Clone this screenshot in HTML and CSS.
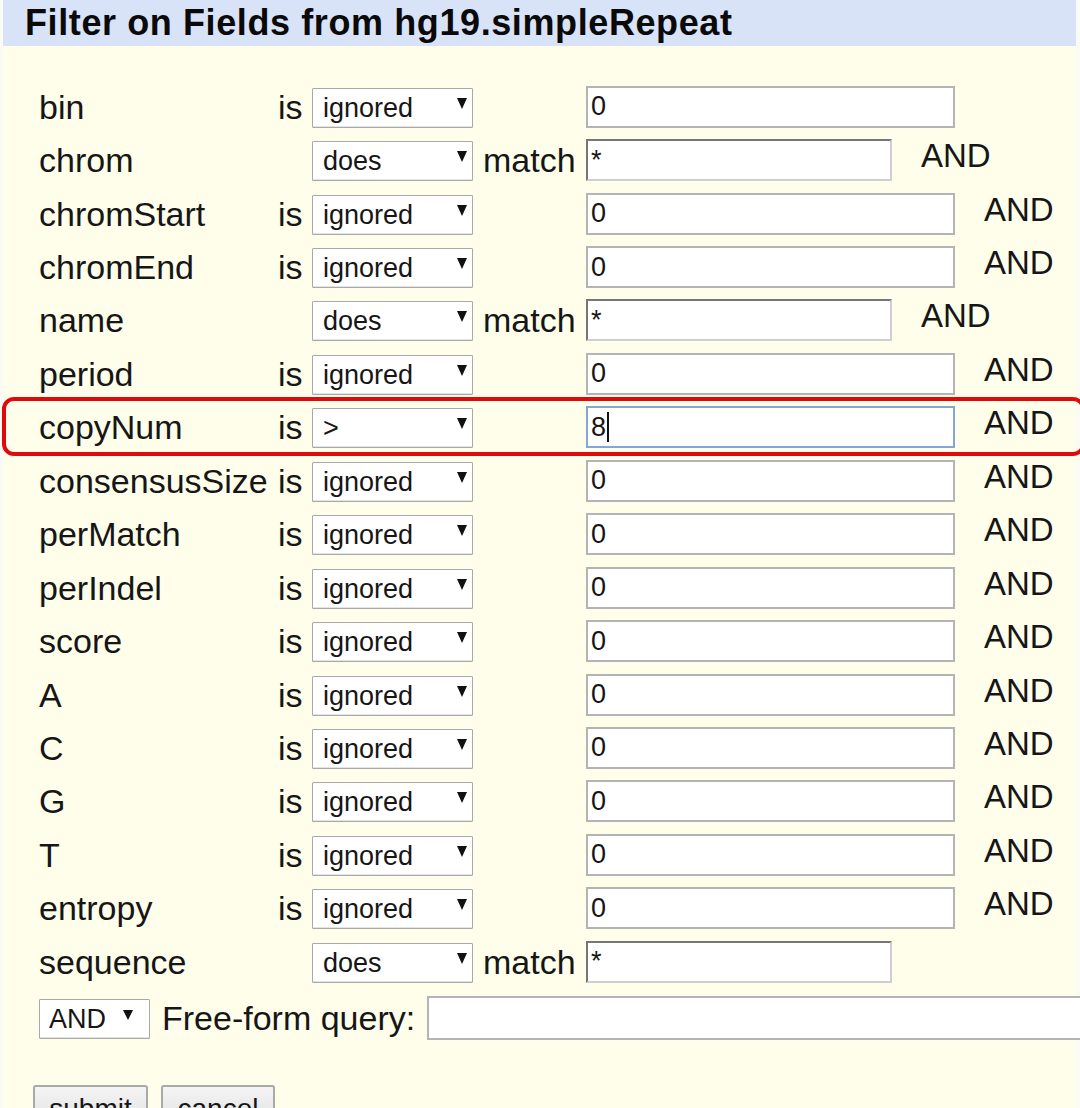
FILE: index.html
```html
<!DOCTYPE html>
<html lang="en">
<head>
  <meta charset="UTF-8">
  <title>Filter on Fields from hg19.simpleRepeat</title>
  <link rel="stylesheet" href="styles.css">
</head>
<body>
  <div class="page">
    <h2 class="title">Filter on Fields from hg19.simpleRepeat</h2>

    <form class="panel">
      <div class="row">
        <span class="label">bin</span><span class="op">is</span>
        <span class="sel"><select><option>ignored</option></select></span><span></span>
        <span class="value"><input class="num" type="text" value="0"></span>
      </div>
      <div class="row">
        <span class="label">chrom</span><span></span>
        <span class="sel"><select><option>does</option></select></span><span class="op">match</span>
        <span class="value"><input class="pat" type="text" value="*"><span class="and">AND</span></span>
      </div>
      <div class="row">
        <span class="label">chromStart</span><span class="op">is</span>
        <span class="sel"><select><option>ignored</option></select></span><span></span>
        <span class="value"><input class="num" type="text" value="0"><span class="and">AND</span></span>
      </div>
      <div class="row">
        <span class="label">chromEnd</span><span class="op">is</span>
        <span class="sel"><select><option>ignored</option></select></span><span></span>
        <span class="value"><input class="num" type="text" value="0"><span class="and">AND</span></span>
      </div>
      <div class="row">
        <span class="label">name</span><span></span>
        <span class="sel"><select><option>does</option></select></span><span class="op">match</span>
        <span class="value"><input class="pat" type="text" value="*"><span class="and">AND</span></span>
      </div>
      <div class="row">
        <span class="label">period</span><span class="op">is</span>
        <span class="sel"><select><option>ignored</option></select></span><span></span>
        <span class="value"><input class="num" type="text" value="0"><span class="and">AND</span></span>
      </div>
      <div class="row marked">
        <span class="label">copyNum</span><span class="op">is</span>
        <span class="sel"><select><option>&gt;</option></select></span><span></span>
        <span class="value"><span class="num focus">8<span class="caret"></span></span><span class="and">AND</span></span>
      </div>
      <div class="row">
        <span class="label">consensusSize</span><span class="op">is</span>
        <span class="sel"><select><option>ignored</option></select></span><span></span>
        <span class="value"><input class="num" type="text" value="0"><span class="and">AND</span></span>
      </div>
      <div class="row">
        <span class="label">perMatch</span><span class="op">is</span>
        <span class="sel"><select><option>ignored</option></select></span><span></span>
        <span class="value"><input class="num" type="text" value="0"><span class="and">AND</span></span>
      </div>
      <div class="row">
        <span class="label">perIndel</span><span class="op">is</span>
        <span class="sel"><select><option>ignored</option></select></span><span></span>
        <span class="value"><input class="num" type="text" value="0"><span class="and">AND</span></span>
      </div>
      <div class="row">
        <span class="label">score</span><span class="op">is</span>
        <span class="sel"><select><option>ignored</option></select></span><span></span>
        <span class="value"><input class="num" type="text" value="0"><span class="and">AND</span></span>
      </div>
      <div class="row">
        <span class="label">A</span><span class="op">is</span>
        <span class="sel"><select><option>ignored</option></select></span><span></span>
        <span class="value"><input class="num" type="text" value="0"><span class="and">AND</span></span>
      </div>
      <div class="row">
        <span class="label">C</span><span class="op">is</span>
        <span class="sel"><select><option>ignored</option></select></span><span></span>
        <span class="value"><input class="num" type="text" value="0"><span class="and">AND</span></span>
      </div>
      <div class="row">
        <span class="label">G</span><span class="op">is</span>
        <span class="sel"><select><option>ignored</option></select></span><span></span>
        <span class="value"><input class="num" type="text" value="0"><span class="and">AND</span></span>
      </div>
      <div class="row">
        <span class="label">T</span><span class="op">is</span>
        <span class="sel"><select><option>ignored</option></select></span><span></span>
        <span class="value"><input class="num" type="text" value="0"><span class="and">AND</span></span>
      </div>
      <div class="row">
        <span class="label">entropy</span><span class="op">is</span>
        <span class="sel"><select><option>ignored</option></select></span><span></span>
        <span class="value"><input class="num" type="text" value="0"><span class="and">AND</span></span>
      </div>
      <div class="row">
        <span class="label">sequence</span><span></span>
        <span class="sel"><select><option>does</option></select></span><span class="op">match</span>
        <span class="value"><input class="pat" type="text" value="*"></span>
      </div>

      <div class="freeform">
        <span class="sel small"><select><option>AND</option></select></span>
        <span class="op">Free-form query:</span>
        <input class="query" type="text">
      </div>

      <div class="buttons">
        <button type="button">submit</button>
        <button type="button">cancel</button>
      </div>
    </form>
  </div>
</body>
</html>
```

FILE: styles.css
```css
* { box-sizing: border-box; }
html, body {
  margin: 0;
  height: 100%;
  overflow: hidden;
  background: #fbfbf6;
}
body {
  font-family: "Liberation Sans", Arial, sans-serif;
  color: #161616;
}
.page {
  margin: 0 4px 0 3px;
  height: 100%;
  background: #fffeeb;
}
.title {
  margin: 0;
  height: 46px;
  padding: 3px 0 0 22px;
  background: #d9e3f7;
  font-size: 36px;
  font-weight: bold;
  letter-spacing: 0.6px;
  line-height: 40px;
  color: #0a0a0a;
}
.panel {
  padding: 34px 0 0 36px;
}
.row {
  position: relative;
  display: grid;
  grid-template-columns: 239px 34px 171px 103px 1fr;
  align-items: center;
  height: 53.45px;
  font-size: 34px;
}
.label, .op {
  white-space: nowrap;
  line-height: 1;
}
.sel {
  position: relative;
  display: inline-block;
}
.sel select {
  -webkit-appearance: none;
  appearance: none;
  width: 161px;
  height: 40px;
  padding: 0 0 0 10px;
  border: 1px solid #a9a9a9;
  border-radius: 1px;
  background: #fff;
  font-family: inherit;
  font-size: 27px;
  color: #161616;
  box-shadow: inset 0 -1px 0 #e4e4e4;
}
.sel::after {
  content: "";
  position: absolute;
  right: 16px;
  top: 12px;
  border-left: 5px solid transparent;
  border-right: 5px solid transparent;
  border-top: 11px solid #111;
  pointer-events: none;
}
.value {
  display: flex;
  align-items: center;
}
.value input, .value .num {
  height: 42px;
  padding: 0 3px;
  background: #fff;
  font-family: inherit;
  font-size: 27px;
  color: #161616;
  outline: none;
}
.num {
  width: 369px;
  border: 2px solid #b4b4b4;
}
.value .num.focus {
  display: flex;
  align-items: center;
  border-color: #86a6da;
}
.caret {
  width: 2px;
  height: 30px;
  margin-left: 1px;
  background: #111;
}
.pat {
  width: 306px;
  border: 2px solid;
  border-color: #767676 #cfcfcf #cfcfcf #767676;
}
.and {
  margin: 0 0 9px 29px;
  font-size: 33px;
  line-height: 1;
}
.marked::before {
  content: "";
  position: absolute;
  left: -37px;
  width: 1075px;
  top: -4px;
  bottom: -2px;
  border: 4px solid #e00a0a;
  border-radius: 12px;
  pointer-events: none;
}
.freeform {
  display: flex;
  align-items: center;
  gap: 12px;
  margin-top: 2px;
  height: 56px;
  font-size: 34px;
  white-space: nowrap;
}
.sel.small select { width: 111px; padding-left: 9px; }
.sel.small::after { right: 17px; top: 13px; border-left-width: 5px; border-right-width: 5px; border-top-width: 10px; }
.query {
  flex: none;
  width: 700px;
  height: 44px;
  border: 2px solid #b4b4b4;
  background: #fff;
}
.buttons {
  display: flex;
  gap: 13px;
  margin: 39px 0 0 -6px;
}
.buttons button {
  width: 115px;
  height: 48px;
  padding: 0;
  border: 2px solid #a9a9a9;
  border-radius: 3px;
  background: linear-gradient(#f4f4f4, #dedede);
  font-family: inherit;
  font-size: 28px;
  line-height: 40px;
  color: #161616;
  vertical-align: top;
}
.buttons button + button { width: 114px; }
```
